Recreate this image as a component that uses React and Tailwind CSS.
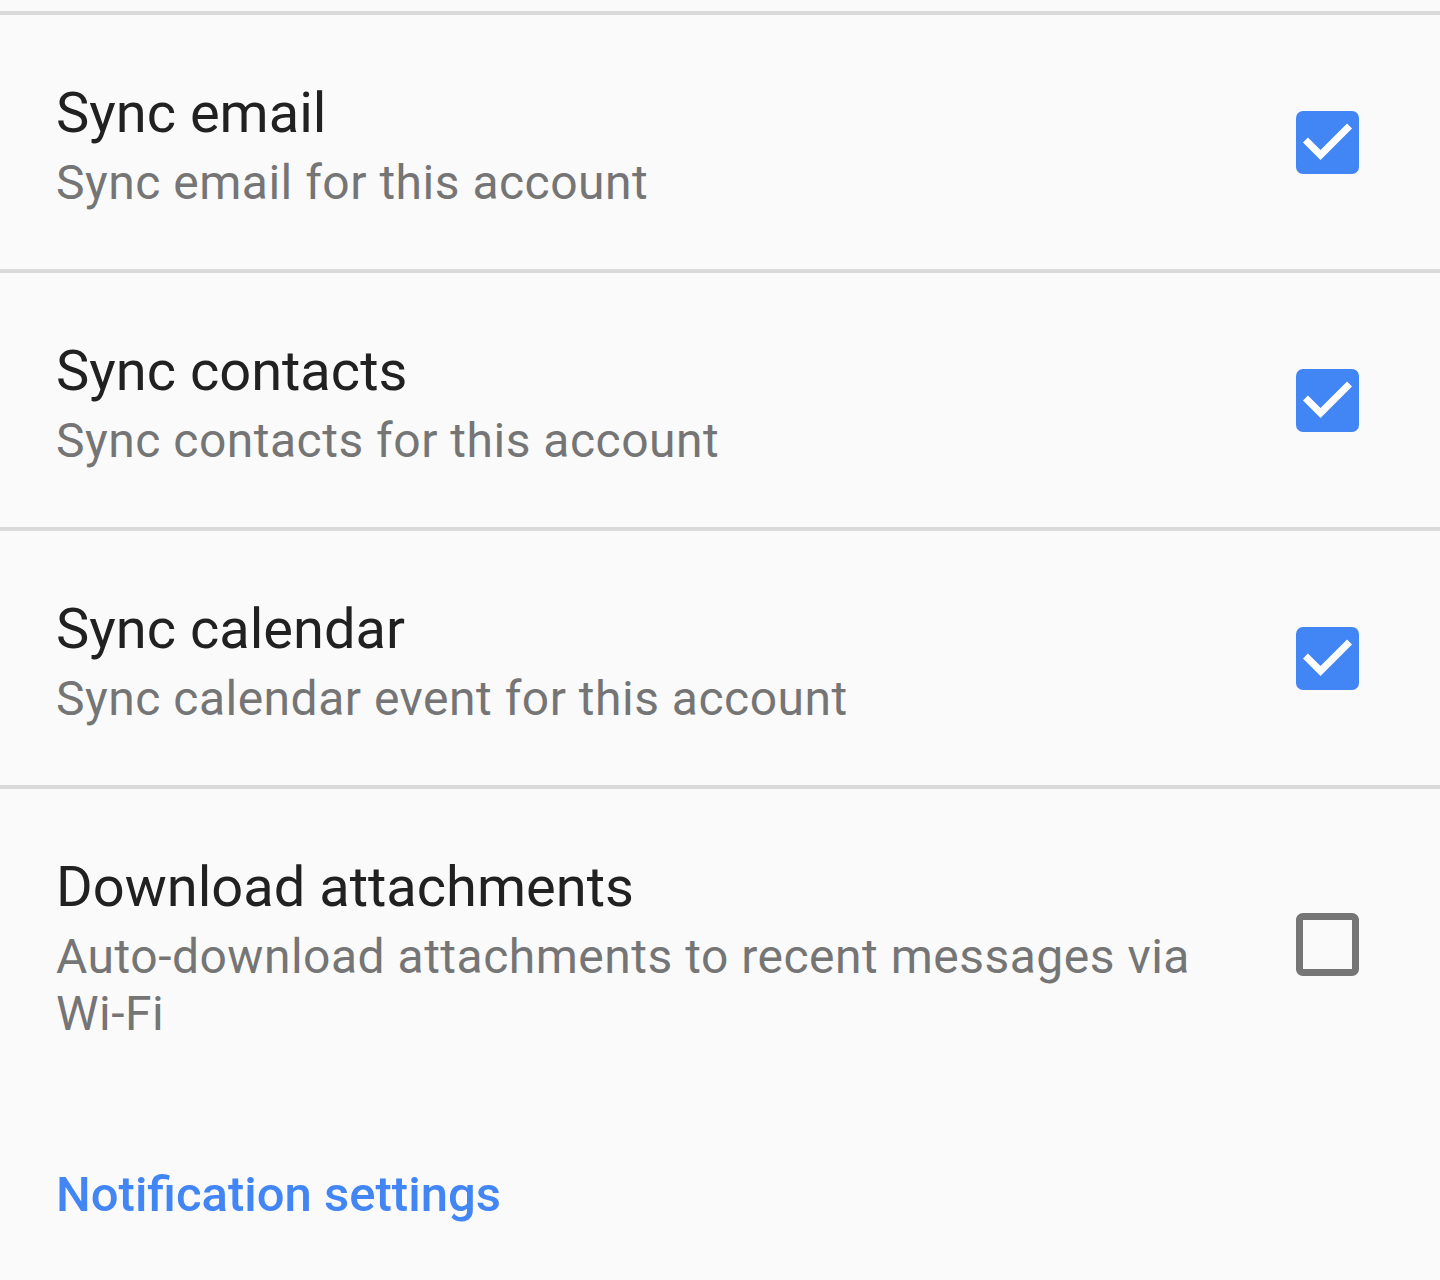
import React from 'react';

const rows = [
  { title: 'Sync email', sub: 'Sync email for this account', checked: true },
  { title: 'Sync contacts', sub: 'Sync contacts for this account', checked: true },
  { title: 'Sync calendar', sub: 'Sync calendar event for this account', checked: true },
  {
    title: 'Download attachments',
    sub: (
      <>
        Auto-download attachments to recent messages via <span className="whitespace-nowrap">Wi-Fi</span>
      </>
    ),
    checked: false,
  },
];

const CheckBox = ({ checked }) =>
  checked ? (
    <svg viewBox="3 3 18 18" className="w-[63px] h-[63px] shrink-0">
      <rect x="3" y="3" width="18" height="18" rx="2" fill="#4285f4" />
      <path d="M10 17l-5-5 1.41-1.41L10 14.17l7.59-7.59L19 8l-9 9z" fill="#ffffff" />
    </svg>
  ) : (
    <svg viewBox="3 3 18 18" className="w-[63px] h-[63px] shrink-0">
      <path
        d="M19 5v14H5V5h14m0-2H5c-1.1 0-2 .9-2 2v14c0 1.1.9 2 2 2h14c1.1 0 2-.9 2-2V5c0-1.1-.9-2-2-2z"
        fill="#757575"
      />
    </svg>
  );

const Row = ({ title, sub, checked, last }) => (
  <div className={`flex items-center gap-[40px] pl-[56px] pr-[81px] ${last ? '' : 'border-b-4 border-[#dadada]'}`}>
    <div className="flex-1 pt-[65px] pb-[58px]">
      <div className="text-[56px] leading-[66px] text-[#212121]">{title}</div>
      <div className="mt-[8px] text-[48px] leading-[57px] tracking-[0.5px] text-[#757575]">{sub}</div>
    </div>
    <CheckBox checked={checked} />
  </div>
);

export default function App() {
  return (
    <div className="min-h-[1280px] bg-[#fafafa] font-['Roboto',sans-serif]">
      <div className="h-[11px]" />
      <div className="border-t-4 border-[#dadada]">
        {rows.map((r, i) => (
          <Row key={r.title} {...r} last={i === rows.length - 1} />
        ))}
      </div>
      <div className="pl-[56px] pt-[65px]">
        <span className="text-[49px] leading-[60px] font-medium text-[#4285f4]">Notification settings</span>
      </div>
    </div>
  );
}
